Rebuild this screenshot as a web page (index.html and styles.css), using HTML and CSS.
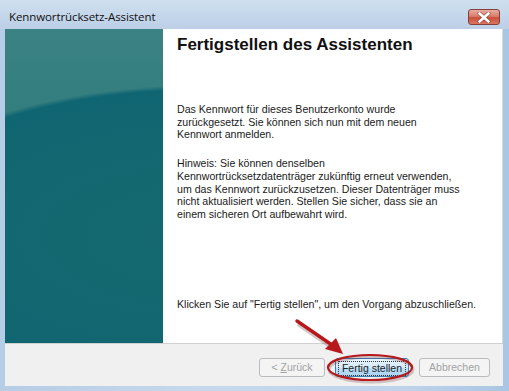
FILE: index.html
```html
<!doctype html>
<html>
    <head>
        <meta http-equiv="Content-Type" content="text/html; charset=utf-8" />
        <title>Kennwortrücksetz-Assistent</title>
        <link rel="stylesheet" href="styles.css">
    </head>
<body>

    <div id="window">
        <div class="titlebar">
            <span class="title">Kennwortrücksetz-Assistent</span>
            <span class="close">
                <svg width="14" height="11" viewBox="0 0 14 11">
                    <path d="M2.5 1.5 L11.5 9.5 M11.5 1.5 L2.5 9.5" stroke="#5a2020" stroke-width="4.2" stroke-linecap="round" opacity="0.45"/>
                    <path d="M2.5 1.5 L11.5 9.5 M11.5 1.5 L2.5 9.5" stroke="#fff" stroke-width="2.6" stroke-linecap="round"/>
                </svg>
            </span>
        </div>

        <div class="main">
            <div class="side"></div>
            <div class="page">
                <h1>Fertigstellen des Assistenten</h1>
                <p>Das Kennwort für dieses Benutzerkonto wurde<br>zurückgesetzt. Sie können sich nun mit dem neuen<br>Kennwort anmelden.</p>
                <p>Hinweis: Sie können denselben<br>Kennwortrücksetzdatenträger zukünftig erneut verwenden,<br>um das Kennwort zurückzusetzen. Dieser Datenträger muss<br>nicht aktualisiert werden. Stellen Sie sicher, dass sie an<br>einem sicheren Ort aufbewahrt wird.</p>
                <p class="last">Klicken Sie auf "Fertig stellen", um den Vorgang abzuschließen.</p>
            </div>
        </div>

        <div class="footer">
            <span class="btn disabled">&lt; <u>Z</u>urück</span>
            <span class="btn default"><span class="focus">Fertig stellen</span></span>
            <span class="btn disabled cancel">Abbrechen</span>
        </div>

        <!-- markierung -->
        <svg class="mark" width="509" height="391" viewBox="0 0 509 391">
            <ellipse cx="370" cy="368" rx="42" ry="12.5" fill="none" stroke="#6b3030" stroke-width="3" opacity="0.25" transform="translate(1,1.5)"/>
            <ellipse cx="370" cy="367.5" rx="42" ry="12.5" fill="none" stroke="#b51a1f" stroke-width="2.2"/>
            <path d="M297 322 L332 346" stroke="#5c2a2a" stroke-width="4.5" opacity="0.25" transform="translate(1,2)"/>
            <path d="M297 321 L332 345" stroke="#b8171c" stroke-width="3.4" stroke-linecap="round"/>
            <path d="M343 354 L325 349 L336 338 Z" fill="#b8171c"/>
        </svg>
    </div>

</body>
</html>
```

FILE: styles.css
```css
* {
    margin: 0;
    padding: 0;
}

body {
    width: 509px;
    height: 391px;
    overflow: hidden;
    font-family: "Liberation Sans", Arial, sans-serif;
}

#window {
    position: relative;
    width: 509px;
    height: 391px;
    box-sizing: border-box;
    padding: 0 6px 5px 5px;
    display: flex;
    flex-direction: column;
    background: linear-gradient(to right, #b6cde6 0%, #c6d9ec 40%, #bed3ea 80%, #a9c5e3 100%);
}

.titlebar {
    height: 29px;
    display: flex;
    align-items: flex-start;
    justify-content: space-between;
    margin: 0 -6px 0 -5px;
    padding: 0 9px 0 9px;
    background: linear-gradient(to bottom, #cfdfef 0%, #bccfe6 100%);
}

.title {
    font-family: "Open Sans", "Liberation Sans", sans-serif;
    font-size: 11.5px;
    color: #111;
    line-height: 13px;
    margin-top: 10px;
    letter-spacing: -0.1px;
}

.close {
    width: 32px;
    height: 16px;
    margin-top: 9px;
    box-sizing: border-box;
    border: 1px solid #84403a;
    border-radius: 3px;
    background: linear-gradient(to bottom, #e9aca2 0%, #da7d69 45%, #c9503a 55%, #dc7560 100%);
    display: flex;
    align-items: center;
    justify-content: center;
}

.main {
    height: 314px;
    display: flex;
}

.side {
    width: 158px;
    background:
        radial-gradient(ellipse 346px 150px at 200px 206px, #15686f 0%, #136870 40%, #106572 97%, rgba(19, 104, 112, 0) 100%),
        linear-gradient(to bottom, #3a8283 0%, #2f7a7b 50%, #1a6c72 80%, #0e6476 100%);
}

.page {
    flex: 1;
    background: #fff;
    border-right: 1px solid #d6dbe0;
    padding: 5px 0 0 14px;
    font-family: "Liberation Sans", Arial, sans-serif;
    font-size: 10.6px;
    line-height: 12.7px;
    color: #1a1a1a;
}

h1 {
    font-size: 17px;
    line-height: 22px;
    font-weight: bold;
    color: #111;
    margin-bottom: 47px;
}

p {
    margin-bottom: 16px;
}

p.last {
    margin-top: 77px;
}

.footer {
    height: 43px;
    box-sizing: border-box;
    border-top: 1px solid #d0d0d0;
    background: #f0f0f0;
    display: flex;
    align-items: flex-start;
    justify-content: flex-end;
    gap: 10px;
    padding: 14px 13px 0 0;
}

.btn {
    height: 19px;
    box-sizing: border-box;
    border: 1px solid #aab0b5;
    border-radius: 3px;
    background: linear-gradient(to bottom, #f4f4f4 0%, #ececec 50%, #e2e2e2 51%, #e9e9e9 100%);
    font-size: 10.5px;
    line-height: 17px;
    text-align: center;
    color: #222;
}

.btn.disabled {
    width: 66px;
    color: #a3a3a3;
    background: #f4f4f4;
    border-color: #b9bcbf;
}

.btn.cancel {
    width: 71px;
}

.btn u {
    text-decoration: underline;
}

.btn.default {
    width: 74px;
    border-color: #3c7fb1;
    background: linear-gradient(to bottom, #e8f4fc 0%, #d5eafa 50%, #bfe0f8 51%, #a8d4f4 100%);
    padding: 2px;
}

.btn .focus {
    display: block;
    height: 13px;
    line-height: 13px;
    border: 1px dotted #333;
}

.mark {
    position: absolute;
    left: 0;
    top: 0;
    pointer-events: none;
}
```
